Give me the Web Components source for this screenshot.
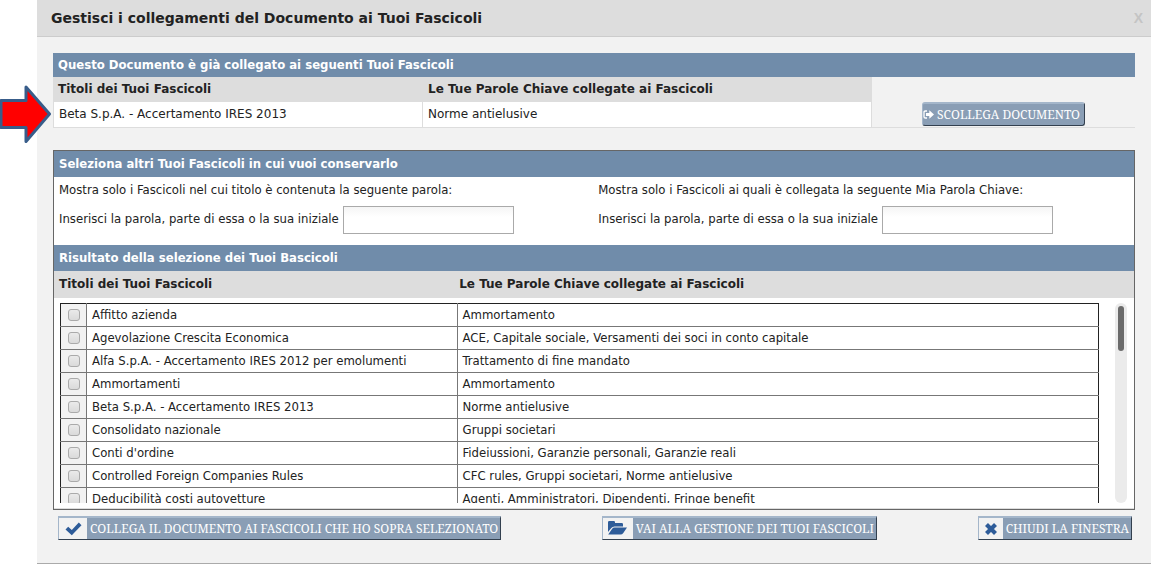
<!DOCTYPE html>
<html lang="it">
<head>
<meta charset="utf-8">
<meta name="viewport" content="width=device-width, initial-scale=1">
<title>Gestisci i collegamenti del Documento</title>
<style>
  body {
    margin: 0;
    background: #fff;
    color: #222;
    font: 12px/18px "DejaVu Sans", Verdana, sans-serif;
    --blue: #708caa;
    --grey: #ddd;
    --pale: #f2f2f2;
    --narrow: "DejaVu Sans Condensed", Tahoma, sans-serif;
  }
</style>
</head>
<body>
<folder-dialog>
  <span slot="title">Gestisci i collegamenti del Documento ai Tuoi Fascicoli</span>
  <linked-folders></linked-folders>
  <folder-picker></folder-picker>
  <action-button slot="actions" icon="check">COLLEGA IL DOCUMENTO AI FASCICOLI CHE HO SOPRA SELEZIONATO</action-button>
  <action-button slot="actions" icon="folder">VAI ALLA GESTIONE DEI TUOI FASCICOLI</action-button>
  <action-button slot="actions" icon="cross">CHIUDI LA FINESTRA</action-button>
</folder-dialog>

<script>
function shadow(el, html) {
  const root = el.attachShadow({ mode: 'open' });
  root.innerHTML = html;
  return root;
}

const ICONS = {
  check: '<svg width="28" height="21" viewBox="0 0 28 21"><path d="M6.500 11.500l2.700-2.800 3.600 3.400 7-7.600 2.700 2.700L12.800 17.200z" fill="#2e5c99"/></svg>',
  folder: '<svg width="30" height="21" viewBox="0 0 30 21"><path d="M5 14V4.200Q5 3 6.200 3h4.600Q12 3 12 4.200V5h6.800Q20 5 20 6.200V8.500h-8.500Q9.500 8.500 8.300 10z" fill="#2e5c99"/><path d="M5.200 16.500l4-5.700Q10 9.500 11.500 9.500H24l-3.700 5.500Q19.200 16.500 17.500 16.500z" fill="#2e5c99"/></svg>',
  cross: '<svg width="24" height="21" viewBox="0 0 24 21"><path d="M7.500 6.500l9 9M16.500 6.500l-9 9" stroke="#2e5c99" stroke-width="4.200"/></svg>',
  unlink: '<svg width="12" height="10" viewBox="0 0 12 10"><path d="M4 1H2.300Q1 1 1 2.300v4.400Q1 8 2.300 8H4" fill="none" stroke="#fff" stroke-width="1.300"/><path d="M3 3h3.300V.3L11 4.500 6.300 8.700V6H3z" fill="#fff"/></svg>'
};

customElements.define('action-button', class extends HTMLElement {
  connectedCallback() {
    const icon = this.getAttribute('icon');
    shadow(this, `
      <style>
        :host { display: inline-block; }
        button {
          display: flex; align-items: center; box-sizing: border-box; height: 24px;
          margin: 0; padding: 0 2px 0 0; white-space: nowrap; cursor: pointer;
          color: #fff; background: #8a9eb5;
          font: 12px/20px "Noto Serif", "Liberation Serif", serif;
          border: 1px solid #33404f; border-top: 2px solid #a4b6ca; border-left-color: #a4b6ca;
        }
        i { display: flex; background: var(--pale); margin-right: 3px; }
        .unlink { border-radius: 3px; padding-right: 4px; }
        .unlink i { background: none; margin-right: 2px; }
        svg { display: block; }
      </style>
      <button type="button" class="${icon}"><i>${ICONS[icon]}</i><slot></slot></button>`);
  }
});

customElements.define('section-bar', class extends HTMLElement {
  connectedCallback() {
    shadow(this, `
      <style>
        :host { display: block; background: var(--blue); color: #fff; padding: 4px 5px; }
        h2 { margin: 0; font: bold 13px/18px var(--narrow); }
      </style>
      <h2><slot></slot></h2>`);
  }
});

customElements.define('folder-dialog', class extends HTMLElement {
  connectedCallback() {
    shadow(this, `
      <style>
        :host { display: block; position: relative; padding-left: 37px; }
        section { background: var(--pale); border-bottom: 1px solid #aaa; }
        header {
          display: flex; justify-content: space-between; align-items: center;
          height: 36px; padding: 0 8px 0 14px;
          background: var(--grey); border-bottom: 1px solid #ccc;
        }
        h1 { margin: 0; font-size: 14px; line-height: 20px; }
        .close { border: 0; padding: 0; background: none; color: #c4c4c4; font: bold 14px/20px "Liberation Sans", sans-serif; cursor: pointer; }
        main { padding: 16px 16px 0; }
        footer { display: flex; justify-content: space-between; padding: 6px 19px 23px 21px; }
        .pointer { position: absolute; left: 0; top: 84px; }
      </style>
      <section>
        <header><h1><slot name="title"></slot></h1><button class="close" type="button" aria-label="Chiudi">X</button></header>
        <main><slot></slot></main>
        <footer><slot name="actions"></slot></footer>
      </section>
      <svg class="pointer" width="52" height="60" viewBox="0 0 52 60">
        <path d="M1 16.500H26V3L49.500 30 26 57.500V43.500H1z" fill="#f00" stroke="#385d8a" stroke-width="3" stroke-linejoin="round"/>
      </svg>`);
  }
});

customElements.define('linked-folders', class extends HTMLElement {
  connectedCallback() {
    shadow(this, `
      <style>
        :host { display: block; margin-bottom: 22px; }
        section-bar { padding: 3px 5px; }
        table { width: 100%; table-layout: fixed; border-spacing: 0; border-bottom: 1px solid var(--grey); }
        th, td { height: 25px; box-sizing: border-box; text-align: left; padding: 0 5px 2px; }
        th { background: var(--grey); }
        td { background: #fff; border: 0 solid var(--grey); border-right-width: 1px; }
        td:first-child { border-left-width: 1px; }
        .action { background: none; border: 0; padding: 0; text-align: center; vertical-align: top; }
        action-button { vertical-align: top; }
      </style>
      <section-bar>Questo Documento è già collegato ai seguenti Tuoi Fascicoli</section-bar>
      <table>
        <colgroup><col style="width:34.200%"><col style="width:41.500%"><col></colgroup>
        <thead><tr><th>Titoli dei Tuoi Fascicoli</th><th>Le Tue Parole Chiave collegate ai Fascicoli</th><td class="action"></td></tr></thead>
        <tbody><tr><td>Beta S.p.A. - Accertamento IRES 2013</td><td>Norme antielusive</td>
          <td class="action"><action-button icon="unlink">SCOLLEGA DOCUMENTO</action-button></td></tr></tbody>
      </table>`);
  }
});

customElements.define('word-filter', class extends HTMLElement {
  connectedCallback() {
    shadow(this, `
      <style>
        :host { display: block; font: 13px/18px var(--narrow); white-space: nowrap; }
        p { margin: 0 0 7px; }
        div { display: flex; align-items: center; gap: 4px; }
        label { margin-bottom: 2px; }
        input {
          box-sizing: border-box; width: 171px; height: 28px; padding: 0 5px; font: inherit;
          border: 1px solid #aaa; border-radius: 0; background: linear-gradient(#f5f5f5, #fff 10px); outline: 0;
        }
      </style>
      <p><slot></slot></p>
      <div><label for="word">Inserisci la parola, parte di essa o la sua iniziale</label><input id="word" type="text"></div>`);
  }
});

const FOLDERS = [
  ['Affitto azienda', 'Ammortamento'],
  ['Agevolazione Crescita Economica', 'ACE, Capitale sociale, Versamenti dei soci in conto capitale'],
  ['Alfa S.p.A. - Accertamento IRES 2012 per emolumenti', 'Trattamento di fine mandato'],
  ['Ammortamenti', 'Ammortamento'],
  ['Beta S.p.A. - Accertamento IRES 2013', 'Norme antielusive'],
  ['Consolidato nazionale', 'Gruppi societari'],
  ["Conti d'ordine", 'Fideiussioni, Garanzie personali, Garanzie reali'],
  ['Controlled Foreign Companies Rules', 'CFC rules, Gruppi societari, Norme antielusive'],
  ['Deducibilità costi autovetture', 'Agenti, Amministratori, Dipendenti, Fringe benefit']
];

customElements.define('folder-list', class extends HTMLElement {
  connectedCallback() {
    shadow(this, `
      <style>
        :host { display: flex; gap: 16px; height: 200px; padding: 5px 7px 5px 6px; border-bottom: 1px solid var(--grey); }
        .rows { flex: 1; overflow-y: auto; scrollbar-width: none; }
        .track { box-sizing: border-box; width: 12px; padding: 3px; border-radius: 6px; background: #ebebeb; }
        .thumb { height: 45px; border-radius: 3px; background: #6b6b6b; }
        table { width: 100%; table-layout: fixed; border-collapse: collapse; border: 1px solid #222; }
        td { height: 22px; padding: 0 5px; border: 1px solid #777; font: 13px/18px var(--narrow); white-space: nowrap; }
        tr:first-child td { border-top-color: #222; }
        td:first-child { background: var(--pale); padding: 0; border-left-color: #222; }
        td:last-child { border-right-color: #222; }
        input {
          appearance: none; display: block; box-sizing: border-box; width: 12px; height: 12px; margin: 0 auto;
          border: 1px solid #aaa; border-radius: 3px; background: linear-gradient(#eaeaea, #dadada);
        }
        input:checked { background: #2e5c99; }
      </style>
      <div class="rows"><table>
        <colgroup><col style="width:26px"><col style="width:35.700%"><col></colgroup>
        <tbody>${FOLDERS.map(([title, words], n) => `<tr>
          <td><input type="checkbox" id="f${n}"></td><td><label for="f${n}">${title}</label></td><td>${words}</td></tr>`).join('')}
        </tbody></table></div>
      <div class="track"><div class="thumb"></div></div>`);
  }
});

customElements.define('folder-picker', class extends HTMLElement {
  connectedCallback() {
    shadow(this, `
      <style>
        :host { display: block; border: 1px solid #666; background: #fff; }
        .filters { display: grid; grid-template-columns: 50.4% 1fr; padding: 4px 5px 11px; }
        .heads { display: grid; grid-template-columns: 37.4% 1fr; padding: 4px 5px 5px; background: var(--grey); font-weight: bold; }
      </style>
      <section-bar>Seleziona altri Tuoi Fascicoli in cui vuoi conservarlo</section-bar>
      <div class="filters">
        <word-filter>Mostra solo i Fascicoli nel cui titolo è contenuta la seguente parola:</word-filter>
        <word-filter>Mostra solo i Fascicoli ai quali è collegata la seguente Mia Parola Chiave:</word-filter>
      </div>
      <section-bar>Risultato della selezione dei Tuoi Bascicoli</section-bar>
      <div class="heads"><span>Titoli dei Tuoi Fascicoli</span><span>Le Tue Parole Chiave collegate ai Fascicoli</span></div>
      <folder-list></folder-list>`);
  }
});
</script>
</body>
</html>
